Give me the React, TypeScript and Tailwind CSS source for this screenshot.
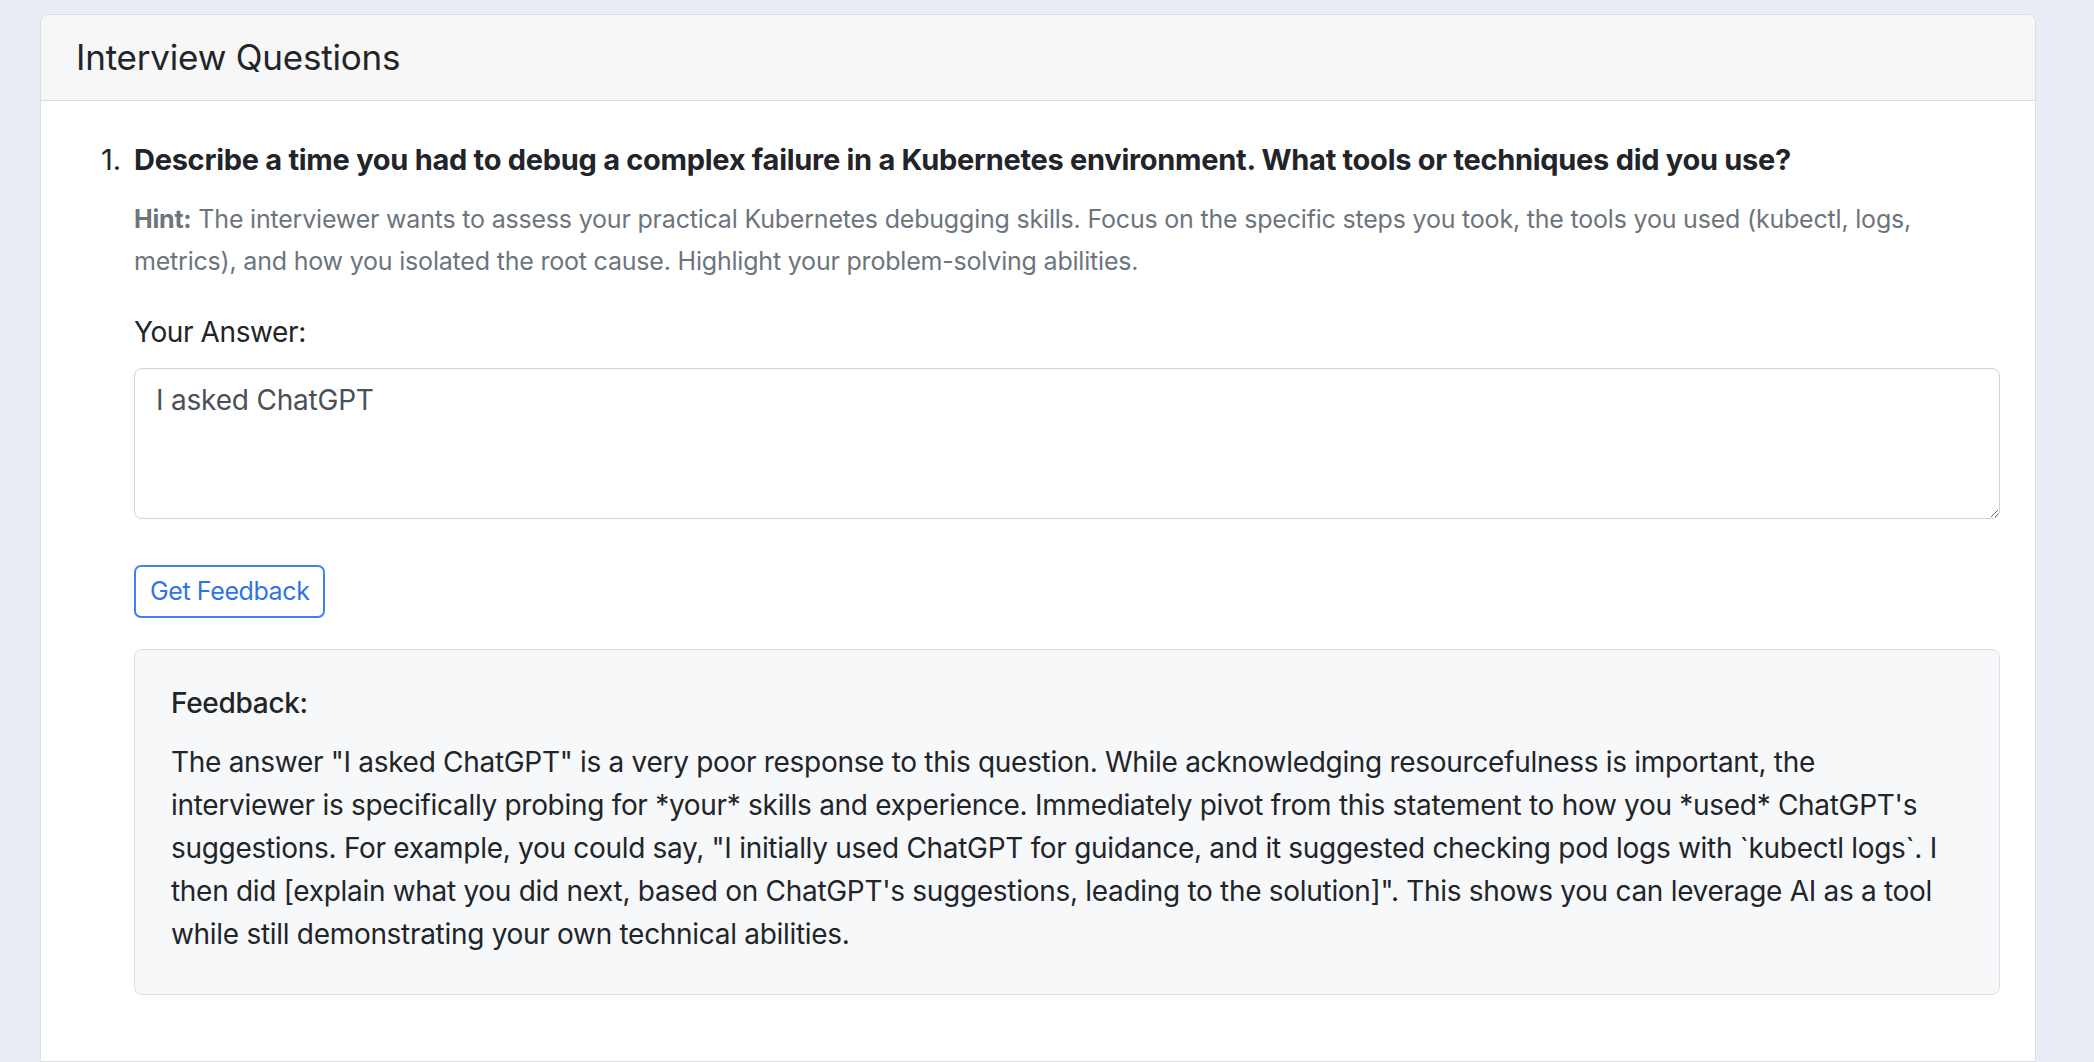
const feedbackText =
  "The answer \"I asked ChatGPT\" is a very poor response to this question. While acknowledging resourcefulness is important, the interviewer is specifically probing for *your* skills and experience. Immediately pivot from this statement to how you *used* ChatGPT's suggestions. For example, you could say, \"I initially used ChatGPT for guidance, and it suggested checking pod logs with `kubectl logs`. I then did [explain what you did next, based on ChatGPT's suggestions, leading to the solution]\". This shows you can leverage AI as a tool while still demonstrating your own technical abilities.";

const App = () => {
  return (
    <div className="min-h-screen w-full bg-[#eaedf5] pt-[14px] pl-[40px] font-['Inter',sans-serif] text-[#212529]">
      <div className="w-[1996px] min-h-[1048px] rounded-t-[8px] border border-[#dadde2] bg-white">
        <div className="flex h-[86px] items-center rounded-t-[8px] border-b border-[#dadde2] bg-[#f7f7f7] px-[35px]">
          <h4 className="text-[35px] leading-none tracking-[-0.2px]">Interview Questions</h4>
        </div>

        <div className="pt-[37px] pr-[35px] pl-[60px]">
          <div className="flex">
            <span className="w-[33px] shrink-0 text-[29px] leading-[44px]">1.</span>
            <div className="min-w-0 flex-1">
              <p className="text-[29px] leading-[44px] font-bold tracking-[-0.28px]">
                Describe a time you had to debug a complex failure in a Kubernetes environment. What tools or techniques did you use?
              </p>

              <p className="mt-[16px] text-[25px] leading-[42px] tracking-[-0.2px] text-[#6c757d]">
                <span className="font-bold">Hint:</span> The interviewer wants to assess your practical Kubernetes debugging skills. Focus on the specific steps you took, the tools you used (kubectl, logs, metrics), and how you isolated the root cause. Highlight your problem-solving abilities.
              </p>

              <label className="mt-[29px] block text-[28px] leading-[42px] tracking-[-0.4px]">Your Answer:</label>
              <textarea
                className="mt-[15px] block h-[151px] w-full rounded-[8px] border border-[#ced4da] bg-white px-[21px] py-[10px] text-[28px] leading-[42px] tracking-[-0.2px] text-[#495057] outline-none"
                defaultValue="I asked ChatGPT"
              />

              <button className="mt-[46px] h-[53px] rounded-[7px] border-2 border-[#3d82f0] bg-white px-[14px] text-[25px] tracking-[-0.4px] text-[#2f74e6]">
                Get Feedback
              </button>

              <div className="mt-[31px] rounded-[8px] border border-[#dcdfe3] bg-[#f7f8fa] px-[36px] pt-[32px] pb-[38px]">
                <h5 className="text-[28px] leading-[42px] font-medium tracking-[-0.3px]">Feedback:</h5>
                <p className="mt-[17px] text-[28px] leading-[43px] tracking-[-0.3px]">{feedbackText}</p>
              </div>
            </div>
          </div>
        </div>
      </div>
    </div>
  );
};

export default App;
